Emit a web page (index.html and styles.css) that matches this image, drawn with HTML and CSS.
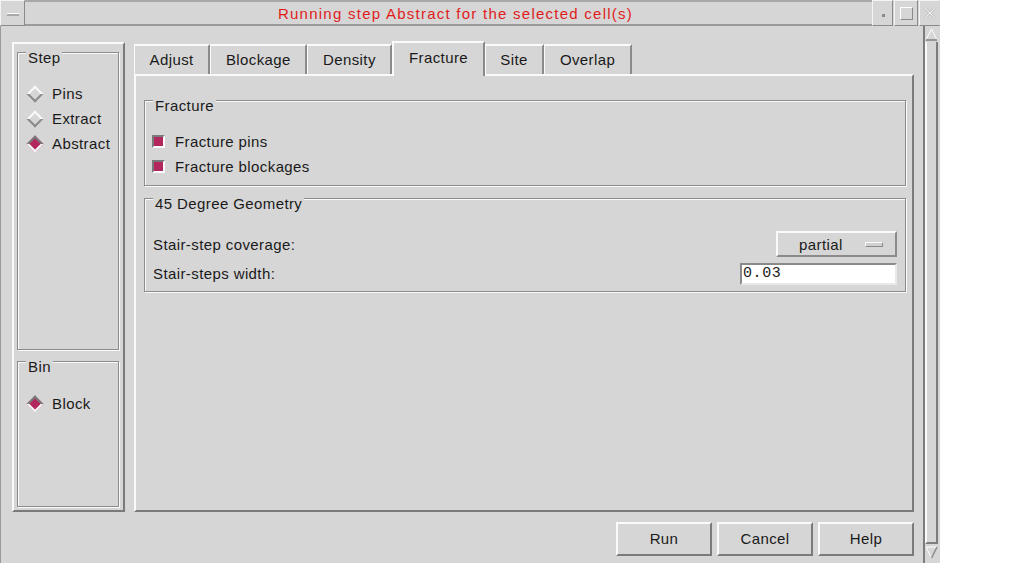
FILE: index.html
```html
<!DOCTYPE html>
<html>
<head>
<meta charset="utf-8">
<link rel="stylesheet" href="styles.css">
</head>
<body>
<div class="window">
  <div class="titlebar">
    <div class="tb-btn tb-menu"><span class="dash"></span></div>
    <div class="title">Running step Abstract for the selected cell(s)</div>
    <div class="tb-btn tb-min"><span class="dot"></span></div>
    <div class="tb-btn tb-max"><span class="sq"></span></div>
    <div class="tb-btn tb-close">
      <svg width="14" height="14" viewBox="0 0 14 14"><path d="M2 2 L12 12 M12 2 L2 12" stroke="#c8c8c8" stroke-width="3" fill="none"/><path d="M2 2 L12 12 M12 2 L2 12" stroke="#f2f2f2" stroke-width="1" fill="none"/></svg>
    </div>
  </div>
  <div class="content">
    <div class="main">
      <div class="top">
        <div class="left-panel">
          <div class="group step-group">
            <span class="group-label">Step</span>
            <div class="radio"><span class="diamond"></span>Pins</div>
            <div class="radio"><span class="diamond"></span>Extract</div>
            <div class="radio"><span class="diamond on"></span>Abstract</div>
          </div>
          <div class="group bin-group">
            <span class="group-label">Bin</span>
            <div class="radio"><span class="diamond on"></span>Block</div>
          </div>
        </div>
        <div class="tabs-area">
          <div class="tabbar">
            <div class="tab">Adjust</div>
            <div class="tab">Blockage</div>
            <div class="tab">Density</div>
            <div class="tab active">Fracture</div>
            <div class="tab">Site</div>
            <div class="tab">Overlap</div>
          </div>
          <div class="panel">
            <div class="group frac-group">
              <span class="group-label">Fracture</span>
              <div class="check"><span class="box"></span>Fracture pins</div>
              <div class="check"><span class="box"></span>Fracture blockages</div>
            </div>
            <div class="group geo-group">
              <span class="group-label">45 Degree Geometry</span>
              <div class="field-row row-option">
                <span>Stair-step coverage:</span>
                <div class="option">partial<span class="opt-ind"></span></div>
              </div>
              <div class="field-row row-text">
                <span>Stair-steps width:</span>
                <div class="textfield">0.03</div>
              </div>
            </div>
          </div>
        </div>
      </div>
      <div class="buttons">
        <div class="btn">Run</div>
        <div class="btn">Cancel</div>
        <div class="btn">Help</div>
      </div>
    </div>
    <div class="scrollbar">
      <div class="arrow up">
        <svg width="13" height="13" viewBox="0 0 13 13"><polygon points="6.5,1 12,12 1,12" fill="#d6d6d6" stroke="#fff" stroke-width="1"/><path d="M12 12 L1 12" stroke="#777" stroke-width="1.5"/></svg>
      </div>
      <div class="thumb"></div>
      <div class="arrow down">
        <svg width="13" height="13" viewBox="0 0 13 13"><polygon points="1,1 12,1 6.5,12" fill="#d6d6d6" stroke="#fff" stroke-width="1"/><path d="M12 1 L6.5 12" stroke="#888" stroke-width="1.5"/></svg>
      </div>
    </div>
  </div>
</div>
</body>
</html>
```

FILE: styles.css
```css
html, body {
  margin: 0;
  padding: 0;
  background: #ffffff;
}

body {
  font-family: "Liberation Sans", Arial, sans-serif;
  font-size: 15px;
  letter-spacing: 0.4px;
  color: #1a1a1a;
}

.window {
  width: 940px;
  height: 563px;
  background: #d6d6d6;
  display: flex;
  flex-direction: column;
}

/* ---------- title bar ---------- */
.titlebar {
  height: 26px;
  display: flex;
  box-sizing: border-box;
}

.tb-btn {
  box-sizing: border-box;
  height: 26px;
  border: 1px solid;
  border-color: #f4f4f4 #8a8a8a #8a8a8a #f4f4f4;
  display: flex;
  align-items: center;
  justify-content: center;
}

.tb-menu { width: 25px; }
.tb-min { width: 21px; margin-left: auto; }
.tb-max { width: 24px; margin-left: 1px; }
.tb-close { width: 21px; margin-left: 1px; border-color: #f4f4f4 #d6d6d6 #8a8a8a #f4f4f4; }

.dash {
  width: 12px;
  height: 2px;
  background: #a8a8a8;
  border-top: 1px solid #fff;
  margin-top: 2px;
}

.dot {
  width: 3px;
  height: 3px;
  background: #8a8a8a;
  margin-top: 4px;
  margin-left: 2px;
}

.sq {
  width: 11px;
  height: 11px;
  border: 1px solid;
  border-color: #fff #8a8a8a #8a8a8a #fff;
}

.title {
  flex: 1;
  box-sizing: border-box;
  height: 26px;
  border-top: 2px solid #a8a8a8;
  border-bottom: 2px solid #9a9a9a;
  text-align: center;
  color: #e01c1c;
  line-height: 24px;
  font-size: 15px;
  letter-spacing: 1.25px;
  padding-left: 14px;
}

/* ---------- content ---------- */
.content {
  flex: 1;
  display: flex;
  min-height: 0;
}

.main {
  flex: 1;
  box-sizing: border-box;
  border-left: 1px solid #9a9a9a;
  padding: 15px 9px 0 11px;
  display: flex;
  flex-direction: column;
}

.top {
  display: flex;
  gap: 9px;
  height: 471px;
}

/* ---------- left panel ---------- */
.left-panel {
  box-sizing: border-box;
  width: 113px;
  margin-top: 1px;
  border: 2px solid;
  border-color: #fafafa #7a7a7a #7a7a7a #fafafa;
  padding: 8px 4px 3px 3px;
  display: flex;
  flex-direction: column;
  gap: 11px;
}

.group {
  position: relative;
  box-sizing: border-box;
  border: 1px solid #8c8c8c;
  box-shadow: inset 1px 1px 0 #fafafa, 1px 1px 0 #fafafa;
}

.group-label {
  position: absolute;
  top: -3px;
  left: 8px;
  padding: 0 2px;
  background: #d6d6d6;
  line-height: 16px;
}

.step-group {
  flex: 1;
  padding: 28px 0 0 9px;
}

.bin-group {
  height: 146px;
  padding: 29px 0 0 9px;
}

.radio {
  display: flex;
  align-items: center;
  height: 25px;
  gap: 9px;
}

.diamond {
  width: 12px;
  height: 12px;
  margin: 0 2px 0 2px;
  transform: rotate(45deg);
  box-sizing: border-box;
  border: 2px solid;
  border-color: #fafafa #8a8a8a #8a8a8a #fafafa;
  background: #d6d6d6;
}

.diamond.on {
  border-color: #7a7a7a #fafafa #fafafa #7a7a7a;
  background: #b2285e;
}

/* ---------- tabs ---------- */
.tabs-area {
  flex: 1;
  display: flex;
  flex-direction: column;
}

.tabbar {
  display: flex;
  align-items: flex-end;
  height: 33px;
}

.tab {
  box-sizing: border-box;
  height: 30px;
  padding: 0 14.6px;
  border-top: 2px solid #fafafa;
  border-left: 1px solid #fafafa;
  border-right: 2px solid #8a8a8a;
  line-height: 28px;
  position: relative;
}

.tab.active {
  height: 35px;
  margin-bottom: -2px;
  border-left: 2px solid #fafafa;
  line-height: 30px;
  background: #d6d6d6;
  z-index: 1;
}

.panel {
  flex: 1;
  box-sizing: border-box;
  border: 2px solid;
  border-color: #fafafa #7a7a7a #7a7a7a #fafafa;
  padding: 24px 6px 0 8px;
  display: flex;
  flex-direction: column;
  gap: 12px;
}

.frac-group {
  height: 86px;
  padding: 28px 0 0 7px;
}

.check {
  display: flex;
  align-items: center;
  height: 25px;
  gap: 10px;
}

.box {
  width: 13px;
  height: 13px;
  box-sizing: border-box;
  border: 2px solid;
  border-color: #7a7a7a #fafafa #fafafa #7a7a7a;
  background: #b2285e;
}

.geo-group {
  height: 94px;
  padding: 32px 8px 0 8px;
}

.field-row {
  display: flex;
  align-items: center;
  justify-content: space-between;
}

.row-option { height: 26px; }
.row-text { height: 21px; margin-top: 6px; }

.option {
  box-sizing: border-box;
  width: 121px;
  height: 26px;
  border: 2px solid;
  border-color: #fafafa #8a8a8a #8a8a8a #fafafa;
  display: flex;
  align-items: center;
  padding-left: 21px;
  gap: 22px;
}

.opt-ind {
  width: 18px;
  height: 5px;
  box-sizing: border-box;
  border: 1px solid;
  border-color: #fafafa #8a8a8a #8a8a8a #fafafa;
  background: #d0d0d0;
}

.textfield {
  box-sizing: border-box;
  width: 157px;
  height: 22px;
  border: 2px solid;
  border-color: #8a8a8a #e8e8e8 #e8e8e8 #8a8a8a;
  background: #ffffff;
  font-family: "Liberation Mono", "DejaVu Sans Mono", monospace;
  font-size: 15px;
  letter-spacing: 0.6px;
  line-height: 18px;
  padding-left: 1px;
}

/* ---------- buttons ---------- */
.buttons {
  display: flex;
  justify-content: flex-end;
  gap: 5px;
  margin-top: 10px;
}

.btn {
  box-sizing: border-box;
  width: 96px;
  height: 34px;
  border: 2px solid;
  border-color: #fafafa #7a7a7a #7a7a7a #fafafa;
  text-align: center;
  line-height: 30px;
}

/* ---------- scrollbar ---------- */
.scrollbar {
  box-sizing: border-box;
  width: 17px;
  border-left: 2px solid #7d7d7d;
  padding: 1px 2px 4px 0;
  display: flex;
  flex-direction: column;
}

.arrow {
  height: 14px;
  display: flex;
  align-items: center;
  justify-content: center;
}

.thumb {
  flex: 1;
  box-sizing: border-box;
  border-left: 2px solid #fafafa;
  border-right: 2px solid #7d7d7d;
  border-bottom: 2px solid #7d7d7d;
  margin: 1px 0;
}
```
